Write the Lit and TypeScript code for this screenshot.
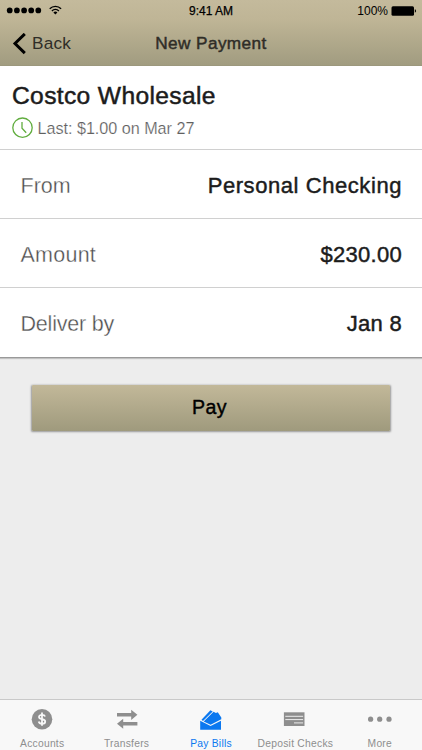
import { LitElement, html, svg, css } from "lit";
import { customElement } from "lit/decorators.js";
import { classMap } from "lit/directives/class-map.js";

const rows = [
  { label: "From", value: "Personal Checking", labelCls: "", cls: "wide" },
  { label: "Amount", value: "$230.00", labelCls: "loose", cls: "" },
  { label: "Deliver by", value: "Jan 8", labelCls: "tight", cls: "" },
];

const tabs = [
  {
    label: "Accounts",
    icon: svg`<circle cx="16" cy="14.2" r="10.3"/>
      <path d="M19.1 11.5C18.6 10.1 17.4 9.8 16 9.8c-1.7 0-3 .8-3 2.2 0 3.1 6.2 1.4 6.2 4.4 0 1.4-1.3 2.3-3.1 2.3-1.7 0-3-.7-3.4-2.2M16 7.6v13.2" fill="none" stroke="#f8f8f8" stroke-width="1.8"/>`,
  },
  {
    label: "Transfers",
    icon: svg`<path d="M6 8h14.2V4.700l6.200 5.100-6.200 5.200v-3.400H6zM26.400 17H12.200v-3.300L6 18.800l6.200 5v-3.300h14.200z"/>`,
  },
  {
    label: "Pay Bills",
    active: true,
    icon: svg`<path d="M5.200 15.700L15.600 20.900l10.400-5.200v9.100H5.200z"/>
      <path d="M6.500 14.800L15.400 5.300l2.300 1.300L8 16z"/>
      <path d="M8.700 16.400L18.600 6.700l2.300 1.200 1.900-.6 3.500 5.100v1.900L15.600 19.700z"/>`,
  },
  {
    label: "Deposit Checks",
    icon: svg`<path d="M4.900 7.300h20.600v13.700H4.900z"/>
      <path d="M6.300 11.300h17.800M6.300 14.600h17.800M15 17.900h9.100" stroke="#f8f8f8" stroke-width="0.9" fill="none"/>`,
  },
  {
    label: "More",
    icon: svg`<circle cx="6.600" cy="14.2" r="2.6"/><circle cx="15.700" cy="14.2" r="2.6"/><circle cx="25" cy="14.2" r="2.6"/>`,
  },
];

@customElement("app-root")
export class AppRoot extends LitElement {
  static styles = css`
    :host {
      display: flex;
      flex-direction: column;
      box-sizing: border-box;
      height: 750px;
      width: 422px;
      overflow: hidden;
      background: #ededed;
      color: #1c1c1c;
      font-family: "Liberation Sans", Arial, sans-serif;
      white-space: nowrap;
    }
    * { box-sizing: border-box; }
    svg { display: block; flex: none; }
    .top {
      height: 66px;
      background: linear-gradient(#c4ba9c, #bfb596 30%, #a19c80);
      border-bottom: 1px solid #9c987d;
    }
    .status {
      height: 22px;
      display: grid;
      grid-template-columns: 1fr auto 1fr;
      align-items: center;
      font-size: 12px;
      line-height: 22px;
      color: #000;
    }
    .clock { -webkit-text-stroke: 0.25px #000; }
    .power {
      display: flex;
      justify-content: flex-end;
      align-items: center;
      gap: 3px;
      padding-right: 5px;
    }
    .nav {
      height: 43px;
      display: grid;
      grid-template-columns: 1fr auto 1fr;
      align-items: center;
      font-size: 17.2px;
      line-height: 40px;
      color: #2f2d27;
    }
    .nav span { padding-bottom: 2px; }
    .back {
      display: flex;
      align-items: center;
      gap: 5px;
      padding-left: 12px;
      letter-spacing: 0.2px;
    }
    .title {
      letter-spacing: 0.4px;
      -webkit-text-stroke: 0.45px #2f2d27;
    }
    .card {
      background: #fff;
      height: 292px;
      border-bottom: 1px solid #999;
      box-shadow: 0 1px 1px rgba(0, 0, 0, 0.18);
    }
    .payee {
      height: 84px;
      padding: 15px 12px 0;
      border-bottom: 1px solid #d0d0d0;
    }
    .name {
      font-size: 24.6px;
      line-height: 30px;
      letter-spacing: 0.35px;
      -webkit-text-stroke: 0.5px #1c1c1c;
    }
    .last {
      display: flex;
      align-items: center;
      gap: 4.5px;
      margin-top: 6px;
      font-size: 16.2px;
      line-height: 22px;
      letter-spacing: -0.03px;
      color: #606060;
      -webkit-text-stroke: 0.2px #fff;
    }
    .row {
      height: 69px;
      padding: 2px 20px 0 20.5px;
      display: flex;
      align-items: center;
      justify-content: space-between;
      border-bottom: 1px solid #d0d0d0;
    }
    .row:last-child { border-bottom: 0; }
    .label {
      padding-top: 2px;
      font-size: 21.5px;
      color: #4c4c4c;
      -webkit-text-stroke: 0.35px #fff;
    }
    .loose { letter-spacing: 0.25px; }
    .tight { letter-spacing: -0.2px; }
    .value {
      font-size: 22px;
      letter-spacing: 0.3px;
      padding-top: 1px;
      -webkit-text-stroke: 0.45px #1c1c1c;
    }
    .wide { letter-spacing: 0.57px; }
    .pay {
      margin: 27px 32px 0;
      height: 46px;
      display: flex;
      align-items: center;
      justify-content: center;
      padding: 0 3px 2px 0;
      border-radius: 1px;
      background: linear-gradient(#c2b899, #9f9a7d);
      box-shadow: 0 0.5px 2px 0.5px rgba(0, 0, 0, 0.36);
      font-size: 19.6px;
      letter-spacing: 0.4px;
      color: #000;
      -webkit-text-stroke: 0.4px #000;
    }
    .tabs {
      margin-top: auto;
      height: 51px;
      display: grid;
      grid-template-columns: repeat(5, 1fr);
      background: #f8f8f8;
      border-top: 1px solid #c9c9c9;
    }
    .tab {
      display: flex;
      flex-direction: column;
      align-items: center;
      padding-top: 5px;
      color: #8e8e8e;
      fill: currentColor;
      font-size: 10.3px;
      line-height: 12px;
      letter-spacing: 0.25px;
    }
    .tab svg { margin-bottom: 5px; }
    .active { color: #0b78f0; }
  `;

  render() {
    return html`
      <header class="top">
        <div class="status">
          <svg width="66" height="22" viewBox="0 0 66 22">
            ${[9.7, 16.9, 24.1, 31.2, 38.3].map((x) => svg`<circle cx=${x} cy="10.4" r="2.85"/>`)}
            <g fill="none" stroke="#000" stroke-width="1.4">
              <path d="M49.7 8.700a8.200 8.200 0 0 1 11.400 0M51.900 10.900a5 5 0 0 1 7 0"/>
            </g>
            <path d="M53.400 12.500a2.900 2.900 0 0 1 4 0l-2 2z"/>
          </svg>
          <span class="clock">9:41 AM</span>
          <div class="power">
            <span>100%</span>
            <svg width="26" height="10" viewBox="0 0 26 10">
              <rect x=".5" y=".2" width="22.5" height="9.6" rx="1.5"/>
              <path d="M23.800 3.300q1.300.3 1.300 1.700t-1.300 1.700z"/>
            </svg>
          </div>
        </div>
        <div class="nav">
          <div class="back">
            <svg width="15" height="22" viewBox="0 0 15 22">
              <path d="M12.800 .9L3 10.500l9.800 9.600" fill="none" stroke="#000" stroke-width="3"/>
            </svg>
            <span>Back</span>
          </div>
          <span class="title">New Payment</span>
        </div>
      </header>
      <section class="card">
        <div class="payee">
          <div class="name">Costco Wholesale</div>
          <div class="last">
            <svg width="21" height="22" viewBox="0 0 21 22" fill="none" stroke="#61ad3f" stroke-width="1.3">
              <circle cx="10.5" cy="10.7" r="9.7"/>
              <path d="M10 5v6.200l4.200 4.600"/>
            </svg>
            <span>Last: $1.00 on Mar 27</span>
          </div>
        </div>
        ${rows.map(
          (r) => html`<div class="row">
            <span class="label ${r.labelCls}">${r.label}</span>
            <span class="value ${r.cls}">${r.value}</span>
          </div>`
        )}
      </section>
      <div class="pay">Pay</div>
      <nav class="tabs">
        ${tabs.map(
          (t) => html`<div class=${classMap({ tab: true, active: !!t.active })}>
            <svg width="32" height="28" viewBox="0 0 32 28">${t.icon}</svg>
            <span>${t.label}</span>
          </div>`
        )}
      </nav>
    `;
  }
}
